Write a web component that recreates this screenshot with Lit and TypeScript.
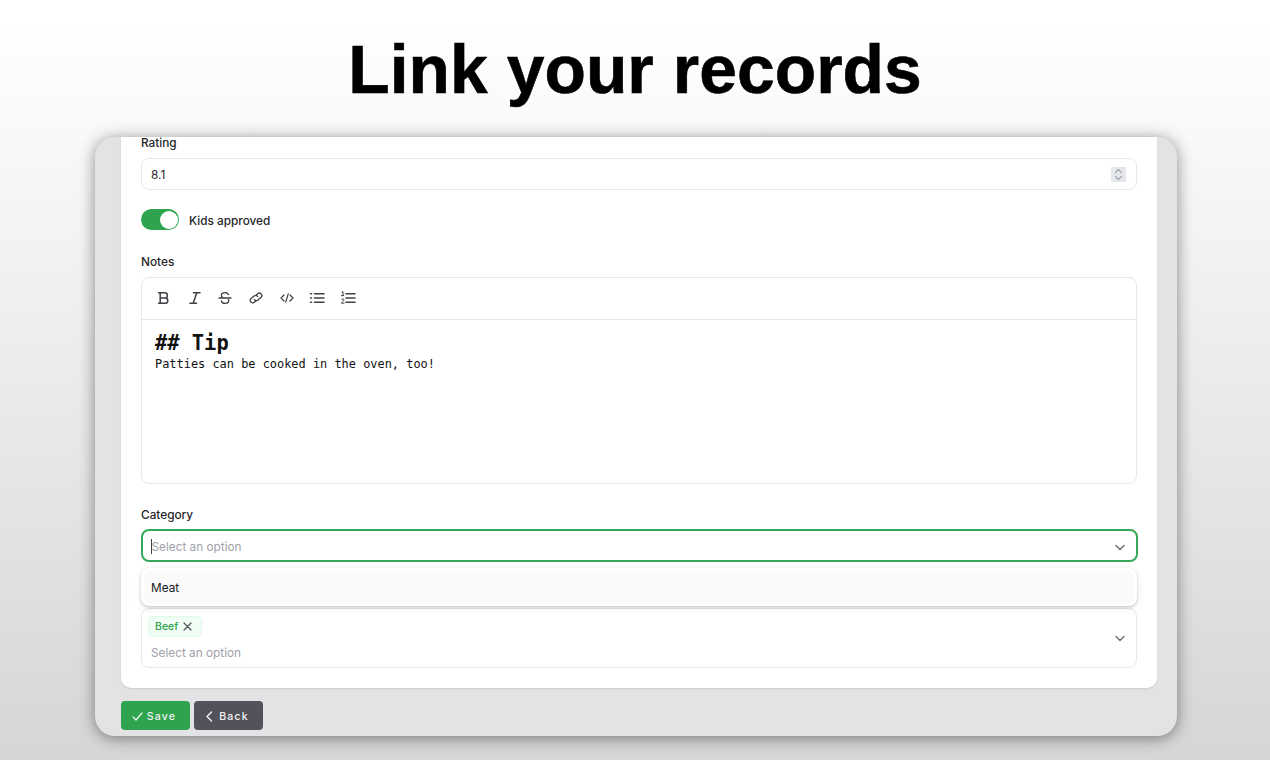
import {LitElement, html, css, svg} from 'lit';
import {customElement} from 'lit/decorators.js';

const chevron = html`<svg class="chev" width="12" height="12" viewBox="0 0 12 12" fill="none" stroke="#71717a" stroke-width="1.5" stroke-linecap="round" stroke-linejoin="round"><path d="M2 4.5l4 4 4-4"/></svg>`;

// toolbar icons, drawn on a 16 box
const tools = [
    svg`<path d="M4.2 2.8h4.6a2.6 2.6 0 0 1 0 5.2H4.2zM4.2 8h5.4a2.7 2.7 0 0 1 0 5.3H4.2zM2.6 2.8h1.6M2.6 13.3h1.6" stroke-width="1.5"/>`,
    svg`<path d="M6.5 2.8h6.5M3 13.2h6.5M9.8 2.8L6.2 13.2" stroke-width="1.5"/>`,
    svg`<path d="M2 8h12M11.5 4.6C11 3.4 9.8 2.6 8 2.6c-2.2 0-3.6 1-3.6 2.6 0 .9.4 1.6 1.2 2.1M4.4 11c.4 1.5 1.7 2.4 3.7 2.4 2.2 0 3.6-1 3.6-2.6 0-.5-.1-.9-.3-1.2" stroke-width="1.3"/>`,
    svg`<path d="M6.4 9.6a2.5 2.5 0 0 0 3.5.4l3-2.4a2.5 2.5 0 0 0-3.2-3.9L8.4 4.8M9.6 6.4a2.5 2.5 0 0 0-3.5-.4l-3 2.4a2.5 2.5 0 0 0 3.2 3.9l1.3-1.1" stroke-width="1.3"/>`,
    svg`<path d="M5 5L2 8l3 3M11 5l3 3-3 3M9.2 3.8L6.8 12.2" stroke-width="1.2"/>`,
    svg`<path d="M5.5 3.8H15M5.5 8H15M5.5 12.2H15M1.5 3.8h1M1.5 8h1M1.5 12.2h1" stroke-width="1.5"/>`,
];

@customElement('app-root')
export class AppRoot extends LitElement {
    static styles = css`
        :host {
            display: block;
            height: 760px;
            overflow: hidden;
            font-family: Inter, "Liberation Sans", sans-serif;
            background: linear-gradient(180deg, #ffffff 3%, #d6d6d6 100%);
            color: #18181b;
        }
        h1 {
            margin: 0;
            height: 137px;
            box-sizing: border-box;
            padding-top: 30px;
            text-align: center;
            font-family: "Liberation Sans", Arial, sans-serif;
            font-size: 67.8px;
            line-height: 80px;
            font-weight: 700;
            letter-spacing: 0.06px;
            color: #000;
            -webkit-text-stroke: 0.6px #000;
        }
        .window {
            width: 1082px;
            height: 599px;
            margin-left: 95px;
            box-sizing: border-box;
            padding: 0 20px 0 26px;
            overflow: hidden;
            background: #e3e3e6;
            border-radius: 20px;
            box-shadow: 0 2px 16px 0 rgba(0, 0, 0, 0.45);
        }
        .card {
            display: flow-root;
            width: 1036px;
            height: 551px;
            box-sizing: border-box;
            padding: 0 20px;
            background: #fff;
            border-radius: 0 0 10px 10px;
            box-shadow: 0 1px 2px rgba(0, 0, 0, 0.1);
        }
        .label {
            display: block;
            height: 16px;
            font-size: 11.8px;
            line-height: 18px;
            font-weight: 500;
            color: #27272a;
        }
        .rating-label { margin-top: -3px; margin-bottom: 8px; }
        .box {
            box-sizing: border-box;
            border: 1px solid #e5e7eb;
            border-radius: 8px;
            display: flex;
            align-items: center;
            padding: 0 10px 0 9px;
            font-size: 11.8px;
            background: #fff;
        }
        .rating { height: 32px; justify-content: space-between; color: #27272a; }
        .rating .value { padding-top: 2px; }
        .stepper {
            width: 15px;
            height: 15px;
            background: #e5e7eb;
            display: flex;
            align-items: center;
            justify-content: center;
        }
        .toggle-row {
            display: flex;
            align-items: center;
            gap: 10px;
            margin-top: 19px;
            font-size: 11.8px;
            font-weight: 500;
            color: #27272a;
        }
        .toggle-row .caption { padding-top: 2px; line-height: 16px; }
        .toggle {
            position: relative;
            width: 38px;
            height: 21px;
            border-radius: 11px;
            background: #2ea44f;
        }
        .knob {
            position: absolute;
            right: 1.5px;
            top: 1.5px;
            width: 18px;
            height: 18px;
            border-radius: 50%;
            background: #fff;
        }
        .notes-label { margin-top: 23px; margin-bottom: 8px; }
        .editor {
            height: 207px;
            box-sizing: border-box;
            border: 1px solid #e5e7eb;
            border-radius: 8px;
        }
        .toolbar {
            height: 42px;
            box-sizing: border-box;
            border-bottom: 1px solid #e5e7eb;
            display: flex;
            align-items: center;
            padding: 0 0 2px 13px;
            gap: 12.7px;
        }
        .toolbar svg { display: block; fill: none; stroke: #3f3f46; stroke-linecap: round; stroke-linejoin: round; }
        .text {
            padding: 9px 13px;
            font-family: "DejaVu Sans Mono", monospace;
            font-size: 11.93px;
            line-height: 15px;
            color: #111;
        }
        .text b { display: block; font-size: 20.4px; line-height: 28px; font-weight: 700; }
        .cat-label { margin-top: 22px; margin-bottom: 8px; }
        .focus {
            height: 33px;
            position: relative;
            border: 2px solid #35a858;
            margin: -1px -0.5px 0;
            padding: 2px 10px 0 9px;
            justify-content: space-between;
            color: #a1a1aa;
        }
        .caret { position: absolute; left: 8px; top: 8px; width: 1px; height: 15px; background: #3f3f46; }
        .chev { flex: none; }
        .select-area { position: relative; padding-top: 46px; }
        .menu {
            position: absolute;
            left: 0;
            right: 0;
            top: 6px;
            height: 38px;
            box-sizing: border-box;
            padding: 3px;
            border-radius: 8px;
            background: #fff;
            box-shadow: 0 1px 3px rgba(0, 0, 0, 0.22), 0 3px 8px rgba(0, 0, 0, 0.06);
        }
        .menu div {
            height: 100%;
            box-sizing: border-box;
            padding: 2px 0 0 7px;
            border-radius: 5px;
            background: #fafafa;
            display: flex;
            align-items: center;
            font-size: 11.8px;
        }
        .multi {
            height: 60px;
            justify-content: space-between;
            color: #a1a1aa;
        }
        .stack { display: flex; flex-direction: column; align-items: flex-start; gap: 9px; margin-left: -3px; }
        .stack span.ph { margin-left: 3px; }
        .tag {
            height: 21px;
            box-sizing: border-box;
            display: flex;
            align-items: center;
            gap: 5px;
            padding: 0 9px 0 6px;
            border: 1px solid #dcfce7;
            border-radius: 5px;
            background: #f0fdf4;
            color: #2ea44f;
            font-size: 10.5px;
            font-weight: 500;
        }
        .actions { display: flex; gap: 4px; margin-top: 13px; }
        .btn {
            height: 29px;
            width: 69px;
            box-sizing: border-box;
            display: flex;
            align-items: center;
            justify-content: center;
            gap: 5px;
            padding: 2px 3px 0 0;
            border-radius: 4px;
            color: #f4f4f5;
            font-size: 10.5px;
            font-weight: 500;
            letter-spacing: 1.2px;
        }
        .save { background: #2ea44f; gap: 4px; }
        .back { background: #52525b; }
    `;

    render() {
        return html`
<h1>Link your records</h1>
<div class="window">
    <div class="card">
        <div class="label rating-label">Rating</div>
        <div class="box rating">
            <span class="value">8.1</span>
            <span class="stepper">
                <svg width="9" height="13" viewBox="0 0 9 13" fill="none" stroke="#9ca3af" stroke-width="1.1" stroke-linecap="round" stroke-linejoin="round"><path d="M1.5 4.5l3-3 3 3M1.5 8.5l3 3 3-3"/></svg>
            </span>
        </div>
        <div class="toggle-row">
            <span class="toggle"><span class="knob"></span></span>
            <span class="caption">Kids approved</span>
        </div>
        <div class="label notes-label">Notes</div>
        <div class="editor">
            <div class="toolbar">
                ${tools.map(t => html`<svg width="18" height="16" viewBox="0 0 16 16">${t}</svg>`)}
                <svg width="18" height="16" viewBox="0 0 16 16">
                    <path d="M6 3.8H15M6 8H15M6 12.2H15" stroke-width="1.5"/>
                    <path d="M2 2.2l1-.6V5.6M1.5 5.6h2.2M1.6 9.6c.3-1 2.4-1 2.4.2 0 1-2.4 2-2.5 3.4H4" stroke-width="1"/>
                </svg>
            </div>
            <div class="text"><b>## Tip</b>Patties can be cooked in the oven, too!</div>
        </div>
        <div class="label cat-label">Category</div>
        <div class="box focus">
            <span class="caret"></span>
            <span>Select an option</span>
            ${chevron}
        </div>
        <div class="select-area">
            <div class="menu"><div>Meat</div></div>
            <div class="box multi">
                <div class="stack">
                    <span class="tag">Beef
                        <svg width="9" height="9" viewBox="0 0 9 9" fill="none" stroke="#52525b" stroke-width="1.2" stroke-linecap="round"><path d="M1 1l7 7M8 1L1 8"/></svg>
                    </span>
                    <span class="ph">Select an option</span>
                </div>
                ${chevron}
            </div>
        </div>
    </div>
    <div class="actions">
        <div class="btn save">
            <svg width="11" height="11" viewBox="0 0 11 11" fill="none" stroke="#f4f4f5" stroke-width="1.2" stroke-linecap="round" stroke-linejoin="round"><path d="M1 6l3 3 6-7"/></svg>
            Save
        </div>
        <div class="btn back">
            <svg width="9" height="11" viewBox="0 0 9 11" fill="none" stroke="#f4f4f5" stroke-width="1.4" stroke-linecap="round" stroke-linejoin="round"><path d="M6.5 1L2 5.5 6.5 10"/></svg>
            Back
        </div>
    </div>
</div>`;
    }
}
